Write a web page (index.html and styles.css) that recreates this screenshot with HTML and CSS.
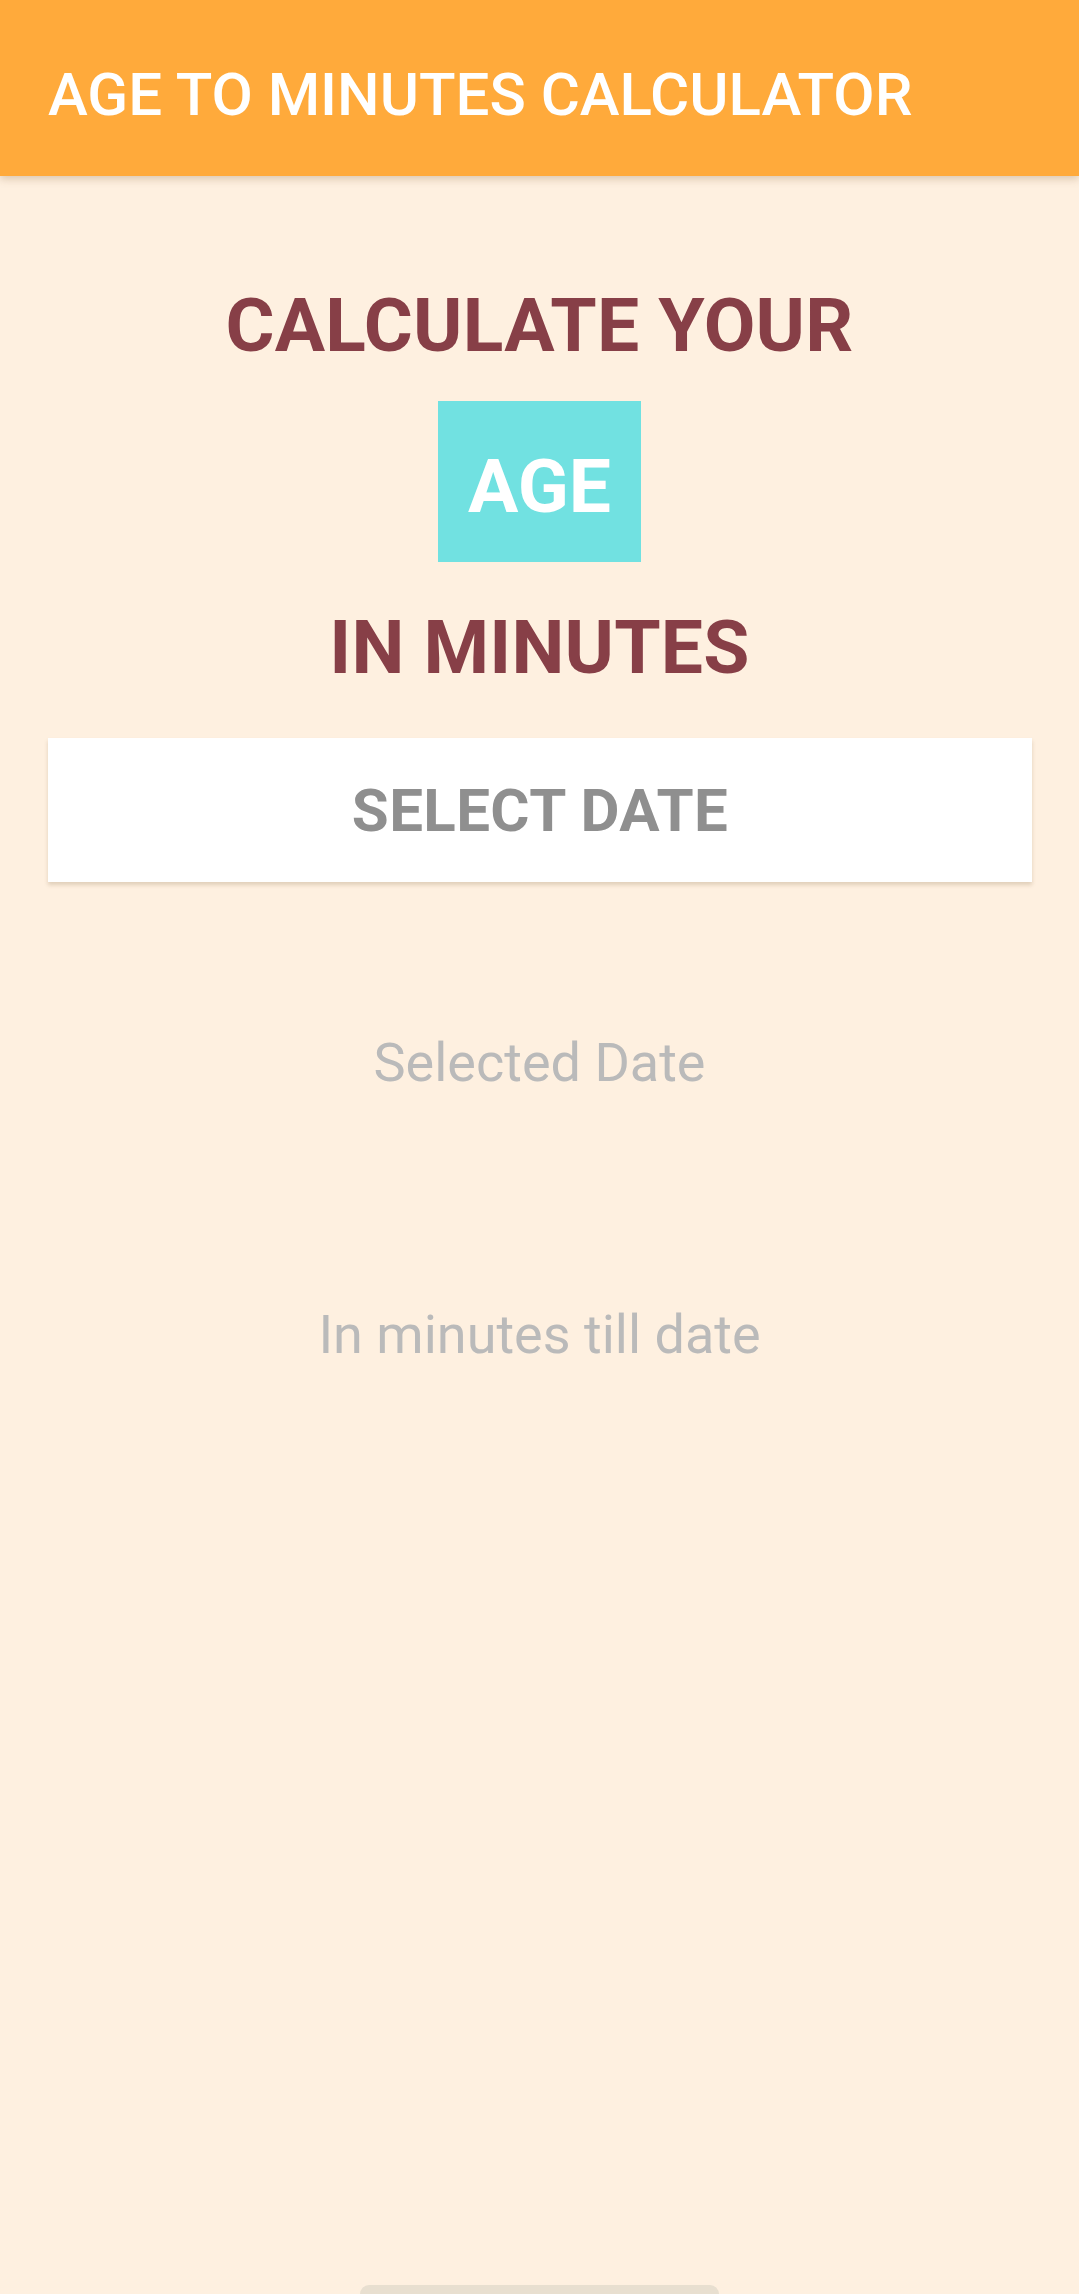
FILE: index.html
```html
<!DOCTYPE html>
<html lang="en">
<head>
<meta charset="utf-8">
<title>Age to Minutes Calculator</title>
<link rel="stylesheet" href="styles.css">
</head>
<body>
<div class="screen">
  <header class="appbar">
    <h1 class="appbar-title">AGE TO MINUTES CALCULATOR</h1>
  </header>
  <main class="content">
    <div class="heading">CALCULATE YOUR</div>
    <div class="age-box">AGE</div>
    <div class="heading heading-second">IN MINUTES</div>
    <button class="select-btn" type="button">SELECT DATE</button>
    <div class="info info-date">Selected Date</div>
    <div class="info info-minutes">In minutes till date</div>
  </main>
  <div class="gesture-bar"></div>
</div>
</body>
</html>
```

FILE: styles.css
```css
html, body {
  margin: 0;
  padding: 0;
}

body {
  width: 1079px;
  height: 2294px;
  overflow: hidden;
  background: #FEF0E0;
  font-family: Roboto, "Liberation Sans", Arial, sans-serif;
}

.screen {
  position: relative;
  width: 1079px;
  height: 2294px;
  background: #FEF0E0;
}

.appbar {
  height: 176px;
  box-sizing: border-box;
  padding: 59px 48px 0;
  background: #FFAA3B;
  box-shadow: 0 3px 8px rgba(120, 80, 30, 0.25);
  position: relative;
  z-index: 1;
}

.appbar-title {
  margin: 0;
  font-size: 60px;
  font-weight: 500;
  line-height: normal;
  color: #FFFFFF;
  letter-spacing: 0;
}

.content {
  display: flex;
  flex-direction: column;
  align-items: center;
  padding-top: 105px;
}

.heading {
  font-size: 75px;
  font-weight: 700;
  line-height: normal;
  color: #873F47;
  letter-spacing: 0.2px;
}

.age-box {
  margin-top: 32px;
  padding: 41px 30px 32px;
  background: #71E1E1;
  color: #FFFFFF;
  font-size: 75px;
  font-weight: 700;
  line-height: normal;
}

.heading-second {
  margin-top: 41px;
}

.select-btn {
  margin-top: 47px;
  align-self: stretch;
  margin-left: 48px;
  margin-right: 47px;
  height: 144px;
  border: none;
  background: #FFFFFF;
  box-shadow: 0 3px 4px rgba(120, 90, 50, 0.22);
  font-family: Roboto, "Liberation Sans", Arial, sans-serif;
  font-size: 60px;
  font-weight: 700;
  letter-spacing: 0.4px;
  color: #8F8F8F;
  padding: 0;
}

.info {
  font-size: 54px;
  font-weight: 400;
  line-height: normal;
  color: #BABABA;
}

.info-date {
  margin-top: 149px;
}

.info-minutes {
  margin-top: 209px;
}

.gesture-bar {
  position: absolute;
  left: 360px;
  bottom: 0;
  width: 359px;
  height: 9px;
  border-radius: 9px 9px 0 0;
  background: #E8DFD0;
}
```
